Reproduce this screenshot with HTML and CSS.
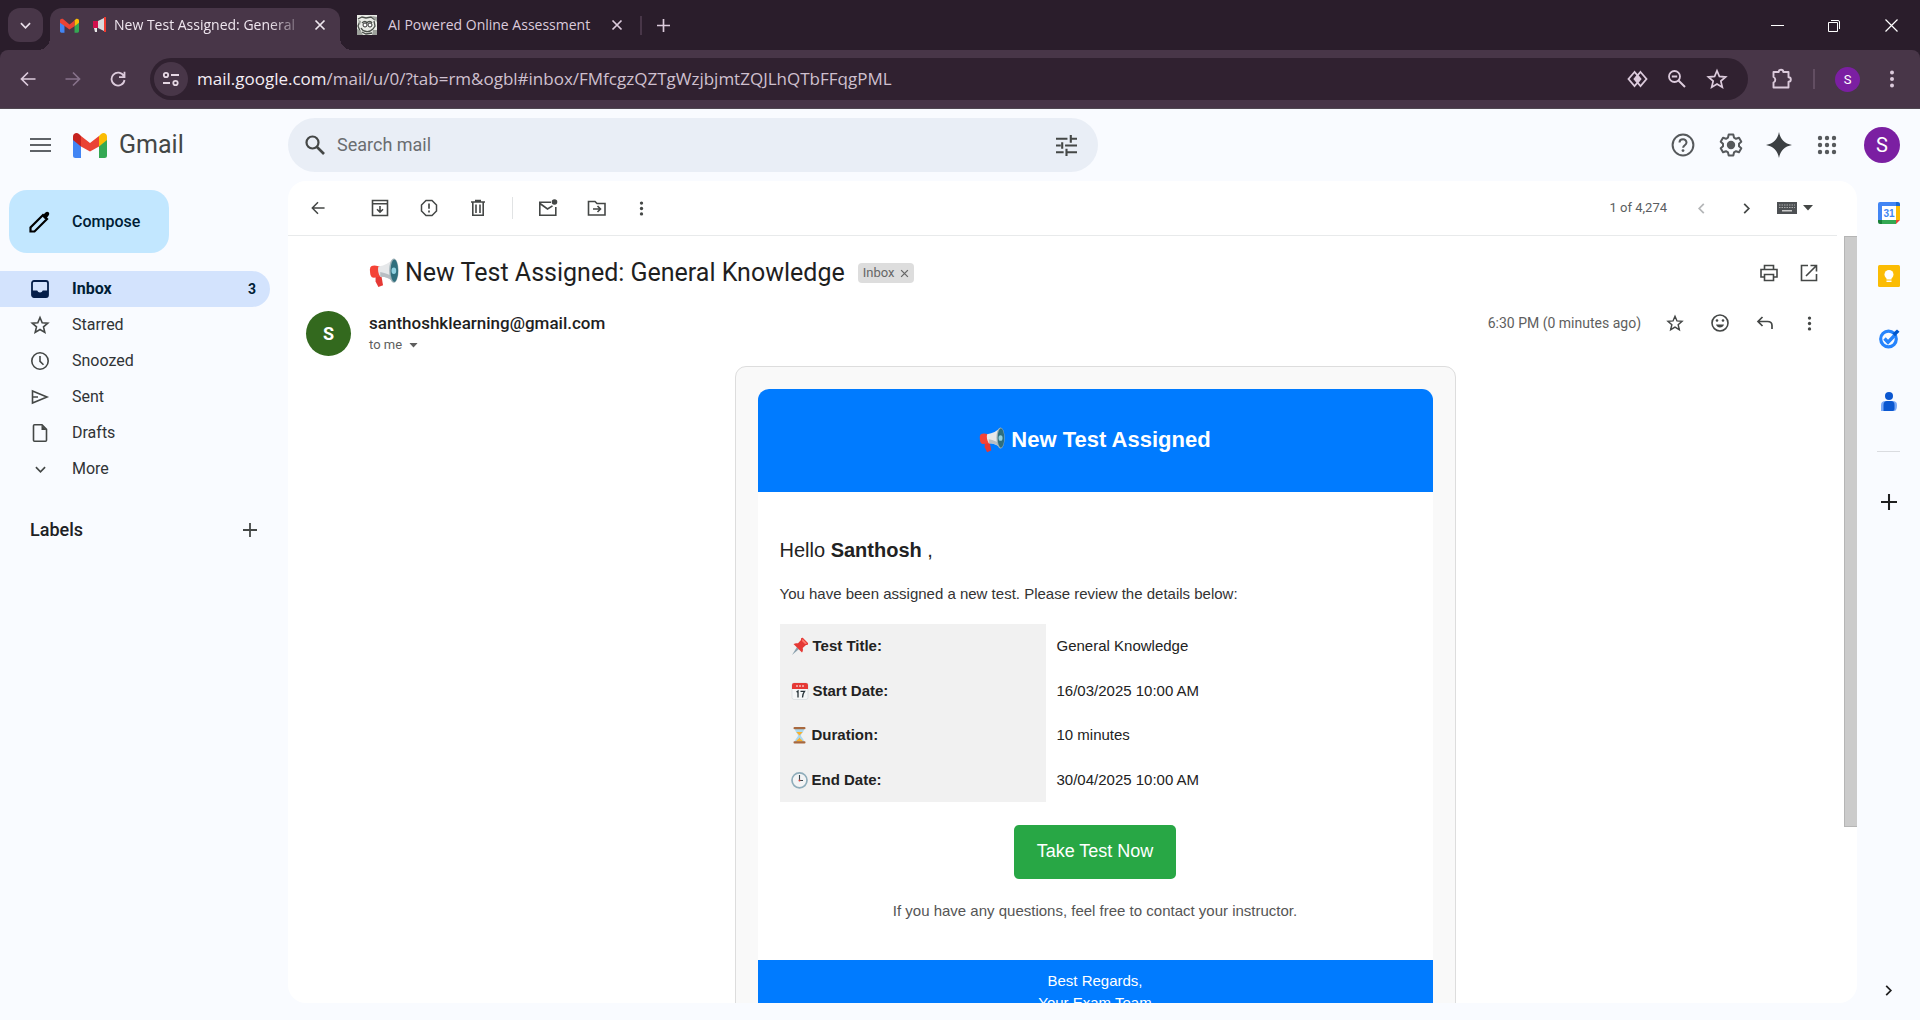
FILE: index.html
```html
<!DOCTYPE html>
<html lang="en">
<head>
<meta charset="utf-8">
<title>New Test Assigned: General Knowledge - Gmail</title>
<link rel="stylesheet" href="styles.css">
</head>
<body>
<svg class="sprite" aria-hidden="true">
  <symbol id="gmail" viewBox="0 0 34 26">
    <path fill="#4285f4" d="M0 7l8 6v13H2.500A2.500 2.500 0 0 1 0 23.500z"/>
    <path fill="#34a853" d="M34 7l-8 6v13h5.500a2.500 2.500 0 0 0 2.500-2.500z"/>
    <path fill="#fbbc04" d="M26 4l2-2c2.500-2 6-.500 6 2.500V8l-8 6.500z"/>
    <path fill="#ea4335" d="M8 14.500V4l9 7 9-7v10.500L17 19.500z"/>
    <path fill="#c5221f" d="M0 4.500V8l8 6.500V4L6 2C3.500 0 0 1.500 0 4.500z"/>
  </symbol>
  <symbol id="gmail-flat" viewBox="0 0 34 26">
    <path fill="#4285f4" d="M0 7l8 4v15H2.500A2.500 2.500 0 0 1 0 23.500z"/>
    <path fill="#34a853" d="M34 7l-8 4v15h5.500a2.500 2.500 0 0 0 2.500-2.500z"/>
    <path fill="#fbbc04" d="M26 4l2-2c2.500-2 6-.500 6 2.500V8l-8 6.500z"/>
    <path fill="#ea4335" d="M0 4.500C0 1.500 3.500 0 6 2l11 9 9-7v10.500L17 20 0 8z"/>
  </symbol>
  <symbol id="megaphone" viewBox="0 0 32 32">
    <path d="M7 17l6 1 2 11-5 2-3-6z" fill="#e53935"/>
    <path d="M1 12c0-3 2-4 5-4l6 1 1 11-8 1c-3 0-4-3-4-9z" fill="#f44336"/>
    <path d="M10 9c7-1 12-4 16-8l1 25c-4-4-9-6-15-6-2-3-3-8-2-11z" fill="#e6e8ea"/>
    <path d="M12 15c6 1 11 3 15 7v4c-4-4-9-6-15-6z" fill="#b8bec3"/>
    <ellipse cx="26.500" cy="13.500" rx="5" ry="13" fill="#9fb2b8"/>
    <ellipse cx="27" cy="13.500" rx="4" ry="12" fill="#2f6f7d"/>
    <ellipse cx="26.500" cy="13.500" rx="2.500" ry="3.500" fill="#8fd0e0"/>
  </symbol>
  <symbol id="close" viewBox="0 0 12 12"><path d="M1.500 1.500l9 9M10.500 1.500l-9 9" fill="none" stroke="currentColor" stroke-width="1.700"/></symbol>
  <symbol id="plus" viewBox="0 0 14 14"><path d="M7 0v14M0 7h14" fill="none" stroke="currentColor" stroke-width="1.800"/></symbol>
  <symbol id="chev-down" viewBox="0 0 12 12"><path d="M1 3.500l5 5 5-5" fill="none" stroke="currentColor" stroke-width="1.800"/></symbol>
  <symbol id="chev-right" viewBox="0 0 12 12"><path d="M3.500 1l5 5-5 5" fill="none" stroke="currentColor" stroke-width="1.900"/></symbol>
  <symbol id="chev-left" viewBox="0 0 12 12"><path d="M8.500 1l-5 5 5 5" fill="none" stroke="currentColor" stroke-width="1.900"/></symbol>
  <symbol id="caret" viewBox="0 0 10 6"><path d="M0 0h10L5 5.500z" fill="currentColor"/></symbol>
  <symbol id="arrow" viewBox="0 0 16 16"><path d="M15.500 8H1.500M8 1.500L1.500 8 8 14.500" fill="none" stroke="currentColor" stroke-width="1.700"/></symbol>
  <symbol id="reload" viewBox="0 0 16 16"><path d="M13.800 5A6.500 6.500 0 1 0 14.500 9M14.500 .8v5.400H9" fill="none" stroke="currentColor" stroke-width="1.800"/></symbol>
  <symbol id="dots" viewBox="0 0 6 18"><g fill="currentColor"><circle cx="3" cy="2.500" r="2"/><circle cx="3" cy="9" r="2"/><circle cx="3" cy="15.500" r="2"/></g></symbol>
  <symbol id="star" viewBox="0 0 20 20"><path d="M10 2.500l2.200 5.200 5.600.500-4.300 3.700 1.300 5.500L10 14.500l-4.800 2.900 1.300-5.500L2.200 8.200l5.600-.500z" fill="none" stroke="currentColor" stroke-width="1.600"/></symbol>
  <symbol id="tune" viewBox="0 0 22 22"><path d="M0 4h12M15.500 4H22M15.500 0v8M0 11h5M9.500 11H22M6.500 7.500v7M0 18h8M11 18h11M11 14.500v7.500" fill="none" stroke="currentColor" stroke-width="2.200"/></symbol>
</svg>

<header class="browser">
  <div class="tabstrip">
    <button class="tab-search" aria-label="Search tabs"><svg width="11" height="11"><use href="#chev-down"/></svg></button>
    <div class="tab tab-active">
      <svg width="19" height="15"><use href="#gmail-flat"/></svg>
      <svg class="tab-horn" width="14" height="16" viewBox="0 0 14 16"><path d="M0 4h6v7H0z" fill="#d0104c"/><path d="M1 11h3v4H2z" fill="#e8e8e8"/><path d="M5 4l6-3v13l-6-3z" fill="#d9dadb"/><path d="M11 0h2v15h-2z" fill="#f03a2e"/></svg>
      <span class="tab-title tab-fade">New Test Assigned: General</span>
      <button class="tab-close" aria-label="Close tab"><svg width="12" height="12"><use href="#close"/></svg></button>
    </div>
    <div class="tab tab-second">
      <svg width="20" height="20" viewBox="0 0 20 20"><path fill="#e9ebe6" d="M0 0h20v20H0z"/><path fill="none" stroke="#4a4f4a" stroke-width="1.300" d="M1 4l4-2 4 1 5-1 4 3M3 6l-2 5 2 5M5 8c2-2 4-2 5 0 1-2 4-2 5 0M4 13c2 4 8 5 12 1M5 17l4 2 6-1M17 6l1 5-2 3"/><path fill="#9da29c" d="M0 14l4 2 2 4H0zM15 1l5 1v5l-3-3zM16 15l4 0v5h-5zM1 5l3 1-1 4z"/><circle cx="8" cy="10" r="2" fill="#fff" stroke="#333"/><circle cx="13" cy="10" r="2" fill="#fff" stroke="#333"/></svg>
      <span class="tab-title">AI Powered Online Assessment</span>
      <button class="tab-close" aria-label="Close tab"><svg width="12" height="12"><use href="#close"/></svg></button>
    </div>
    <span class="tab-divider"></span>
    <button class="new-tab" aria-label="New tab"><svg width="13" height="13"><use href="#plus"/></svg></button>
    <div class="window-controls">
      <button aria-label="Minimize"><svg width="13" height="13" viewBox="0 0 13 13"><path d="M0 6.500h13" stroke="#fff"/></svg></button>
      <button aria-label="Restore"><svg width="13" height="13" viewBox="0 0 13 13"><path d="M.5 3.500h9v9h-9zM3 1.500h7a1.500 1.500 0 0 1 1.500 1.500v7" fill="none" stroke="#fff"/></svg></button>
      <button aria-label="Close"><svg width="13" height="13" viewBox="0 0 13 13"><path d="M.5 .5l12 12M12.500 .5l-12 12" stroke="#fff" stroke-width="1.200"/></svg></button>
    </div>
  </div>
  <div class="toolbar">
    <button class="tool" aria-label="Back"><svg width="16" height="16"><use href="#arrow"/></svg></button>
    <button class="tool tool-off" aria-label="Forward"><svg class="flip" width="16" height="16"><use href="#arrow"/></svg></button>
    <button class="tool" aria-label="Reload"><svg width="16" height="16"><use href="#reload"/></svg></button>
    <div class="omnibox">
      <button class="site-info" aria-label="Site information"><svg width="18" height="16" viewBox="0 0 18 16"><g fill="none" stroke="#e5d7e3" stroke-width="1.800"><circle cx="4" cy="4" r="2.200"/><path d="M9 4h8M1 12h7"/><circle cx="13.500" cy="12" r="2.200"/></g></svg></button>
      <div class="url"><span class="url-host">mail.google.com</span>/mail/u/0/?tab=rm&amp;ogbl#inbox/FMfcgzQZTgWzjbjmtZQJLhQTbFFqgPML</div>
      <button class="omni-btn" aria-label="Handler"><svg width="21" height="18" viewBox="0 0 21 18"><path d="M7.500 2L1.500 9l6 7 6-7zM13.500 2l6 7-6 7-6-7z" fill="none" stroke="currentColor" stroke-width="1.800"/><path d="M10.500 4.500L14 9l-3.500 4.500L7 9z" fill="currentColor"/></svg></button>
      <button class="omni-btn" aria-label="Zoom"><svg width="18" height="18" viewBox="0 0 18 18"><circle cx="6.500" cy="6.500" r="5.500" fill="none" stroke="currentColor" stroke-width="1.800"/><path d="M3.800 6.500h5.400M10.500 10.500l6.500 6.500" stroke="currentColor" stroke-width="2"/></svg></button>
      <button class="omni-btn" aria-label="Bookmark"><svg width="22" height="22"><use href="#star"/></svg></button>
    </div>
    <button class="ext" aria-label="Extensions"><svg width="22" height="22" viewBox="0 0 22 22"><path d="M2.500 4h5.200a2.300 2.300 0 0 1 4.600 0h5.200v5.200a2.300 2.300 0 0 1 0 4.600v5.700h-15v-5a3 3 0 0 0 0-5.500z" fill="none" stroke="currentColor" stroke-width="1.900" stroke-linejoin="round"/></svg></button>
    <span class="tool-divider"></span>
    <button class="profile-small" aria-label="Profile">S</button>
    <button class="chrome-menu" aria-label="Menu"><svg width="6" height="18"><use href="#dots"/></svg></button>
  </div>
</header>

<div class="gmail">
  <header class="topbar">
    <div class="brand">
      <button class="menu-btn" aria-label="Main menu"><svg width="21" height="14" viewBox="0 0 21 14"><path d="M0 1h21M0 7h21M0 13h21" stroke="#5f6368" stroke-width="2"/></svg></button>
      <a class="logo" href="#inbox"><svg width="34" height="26"><use href="#gmail"/></svg><span>Gmail</span></a>
    </div>
    <form class="search" role="search">
      <button type="button" aria-label="Search"><svg width="20" height="20" viewBox="0 0 20 20"><circle cx="7.500" cy="7.500" r="6" fill="none" stroke="currentColor" stroke-width="2.200"/><path d="M12 12l7 7" stroke="currentColor" stroke-width="2.600"/></svg></button>
      <input type="text" placeholder="Search mail" aria-label="Search mail">
      <button type="button" aria-label="Search options"><svg width="21" height="21"><use href="#tune"/></svg></button>
    </form>
    <div class="top-actions">
      <button aria-label="Support"><svg width="24" height="24" viewBox="0 0 24 24"><circle cx="12" cy="12" r="10.400" fill="none" stroke="currentColor" stroke-width="2"/><path d="M8.500 9.600c0-4.200 7-4.400 7-.1 0 2.800-3.300 2.700-3.400 5.300" fill="none" stroke="currentColor" stroke-width="2"/><circle cx="12" cy="17.600" r="1.400" fill="currentColor"/></svg></button>
      <button aria-label="Settings"><svg width="24" height="24" viewBox="0 0 24 24"><path d="M9.700 1.600h4.600l.7 3 2 1.200 3-1 2.300 4-2.300 2v2.400l2.300 2-2.300 4-3-1-2 1.200-.7 3H9.700l-.7-3-2-1.200-3 1-2.300-4 2.300-2v-2.400l-2.300-2 2.300-4 3 1 2-1.200z" fill="none" stroke="currentColor" stroke-width="2" stroke-linejoin="round"/><circle cx="12" cy="12" r="4.200" fill="currentColor"/></svg></button>
      <button aria-label="Gemini"><svg width="26" height="26" viewBox="0 0 26 26"><path d="M13 0c1.500 7.500 5.500 11.500 13 13-7.500 1.500-11.500 5.500-13 13C11.500 18.500 7.500 14.500 0 13 7.500 11.500 11.500 7.500 13 0z" fill="#3c4043"/></svg></button>
      <button aria-label="Google apps"><svg width="20" height="20" viewBox="0 0 20 20"><g fill="currentColor"><circle cx="3" cy="3" r="2.200"/><circle cx="10" cy="3" r="2.200"/><circle cx="17" cy="3" r="2.200"/><circle cx="3" cy="10" r="2.200"/><circle cx="10" cy="10" r="2.200"/><circle cx="17" cy="10" r="2.200"/><circle cx="3" cy="17" r="2.200"/><circle cx="10" cy="17" r="2.200"/><circle cx="17" cy="17" r="2.200"/></g></svg></button>
      <button class="account" aria-label="Account">S</button>
    </div>
  </header>

  <div class="workspace">
    <nav class="sidebar">
      <button class="compose"><svg width="22" height="22" viewBox="0 0 22 22"><path d="M1.500 20.500v-4L14 4l4 4L5.500 20.500z" fill="none" stroke="#000" stroke-width="2.200"/><path d="M13 5l3.500-3.600c1-.9 2.300-.9 3.100-.1s.9 2.100 0 3.100L16.500 8.500z" fill="#000"/></svg><span>Compose</span></button>
      <ul class="folders">
        <li><a class="folder folder-current" href="#inbox"><svg width="18" height="18" viewBox="0 0 18 18"><path d="M3 1h12a2 2 0 0 1 2 2v12a2 2 0 0 1-2 2H3a2 2 0 0 1-2-2V3a2 2 0 0 1 2-2z" fill="none" stroke="#041e49" stroke-width="1.800"/><path d="M1 10.500h5.200a3 3 0 0 0 5.600 0H17V15l-2 2H3l-2-2z" fill="#041e49"/></svg><span>Inbox</span><span class="count">3</span></a></li>
        <li><a class="folder" href="#starred"><svg width="20" height="20"><use href="#star"/></svg><span>Starred</span></a></li>
        <li><a class="folder" href="#snoozed"><svg width="20" height="20" viewBox="0 0 20 20"><circle cx="10" cy="10" r="8.200" fill="none" stroke="currentColor" stroke-width="1.600"/><path d="M10 5v5.300l3.500 3.500" fill="none" stroke="currentColor" stroke-width="1.600"/></svg><span>Snoozed</span></a></li>
        <li><a class="folder" href="#sent"><svg width="20" height="20" viewBox="0 0 20 20"><path d="M2.500 4L17 10 2.500 16zM2.500 10h5.500" fill="none" stroke="currentColor" stroke-width="1.600"/></svg><span>Sent</span></a></li>
        <li><a class="folder" href="#drafts"><svg width="20" height="20" viewBox="0 0 20 20"><path d="M4.500 1.800h7.500l4.500 4.500v10.900a1 1 0 0 1-1 1h-11a1 1 0 0 1-1-1V2.800a1 1 0 0 1 1-1z" fill="none" stroke="currentColor" stroke-width="1.600"/><path d="M11.500 2v5h5z" fill="currentColor"/></svg><span>Drafts</span></a></li>
        <li><a class="folder" href="#more"><svg width="11" height="11"><use href="#chev-down"/></svg><span>More</span></a></li>
      </ul>
      <div class="labels"><h2>Labels</h2><button aria-label="Create new label"><svg width="14" height="14"><use href="#plus"/></svg></button></div>
    </nav>

    <main class="mail">
      <div class="mail-tools">
        <button class="mt mt-back" aria-label="Back to Inbox"><svg width="14" height="14"><use href="#arrow"/></svg></button>
        <button class="mt" aria-label="Archive"><svg width="18" height="18" viewBox="0 0 18 18"><path d="M1.500 1.500h15v15h-15zM1.500 4.800h15M9 7v6M6 10.200l3 3 3-3" fill="none" stroke="currentColor" stroke-width="1.600"/></svg></button>
        <button class="mt" aria-label="Report spam"><svg width="18" height="18" viewBox="0 0 18 18"><path d="M6 1.500h6L16.500 6v6L12 16.500H6L1.500 12V6z" fill="none" stroke="currentColor" stroke-width="1.500"/><path d="M9 4.500v5.300M9 11.500v2" stroke="currentColor" stroke-width="1.700"/></svg></button>
        <button class="mt" aria-label="Delete"><svg width="16" height="18" viewBox="0 0 16 18"><path d="M2.800 3v13.200h10.400V3M1 3h14M5 1.500h6M6 5.500v8.500M10 5.500v8.500" fill="none" stroke="currentColor" stroke-width="1.600"/></svg></button>
        <span class="mt-divider"></span>
        <button class="mt" aria-label="Mark as unread"><svg width="20" height="18" viewBox="0 0 20 18"><path d="M13 3.300H1.800v13h16V8M2 4.500l7.500 5.500 5-3.200" fill="none" stroke="currentColor" stroke-width="1.600"/><circle cx="16.500" cy="3" r="2.800" fill="currentColor"/></svg></button>
        <button class="mt" aria-label="Move to"><svg width="20" height="18" viewBox="0 0 20 18"><path d="M1.500 2.500H8l2 2h8v11.500H1.500zM6 10h7M10.500 7l3 3-3 3" fill="none" stroke="currentColor" stroke-width="1.600"/></svg></button>
        <button class="mt mt-more" aria-label="More"><svg width="5" height="15"><use href="#dots"/></svg></button>
        <span class="pager">1 of 4,274</span>
        <button class="mt-page mt-dim" aria-label="Newer"><svg width="11" height="11"><use href="#chev-left"/></svg></button>
        <button class="mt-page" aria-label="Older"><svg width="11" height="11"><use href="#chev-right"/></svg></button>
        <button class="mt-input" aria-label="Input tools"><svg width="20" height="12" viewBox="0 0 20 12"><path d="M0 0h20v12H0z" fill="#4d5053"/><path d="M2 3h16M2 5.500h16" stroke="#aaa" stroke-dasharray="1.500 1"/><path d="M5 8.800h10" stroke="#ccc" stroke-width="1.500"/></svg><svg width="10" height="6"><use href="#caret"/></svg></button>
      </div>

      <div class="thread-wrap">
        <article class="thread">
          <div class="subject-row">
            <svg width="30" height="30"><use href="#megaphone"/></svg>
            <h1>New Test Assigned: General Knowledge</h1>
            <span class="chip">Inbox <svg width="9" height="9"><use href="#close"/></svg></span>
            <div class="subject-actions">
              <button aria-label="Print all"><svg width="18" height="18" viewBox="0 0 18 18"><path d="M4.500 5V1.500h9V5M4.500 13H1V5.500h16V13h-3.500M4.500 10.500h9v6h-9z" fill="none" stroke="currentColor" stroke-width="1.600"/></svg></button>
              <button aria-label="In new window"><svg width="18" height="18" viewBox="0 0 18 18"><path d="M8 1.500H1.500v15h15V10M10.500 1.500h6v6M16 2L6 12" fill="none" stroke="currentColor" stroke-width="1.600"/></svg></button>
            </div>
          </div>
          <div class="sender-row">
            <span class="sender-avatar">S</span>
            <div class="sender">
              <strong>santhoshklearning@gmail.com</strong>
              <span class="to-me">to me <svg width="9" height="5" viewBox="0 0 10 6"><use href="#caret"/></svg></span>
            </div>
            <time>6:30 PM (0 minutes ago)</time>
            <div class="msg-actions">
              <button aria-label="Star"><svg width="18" height="18"><use href="#star"/></svg></button>
              <button aria-label="Add reaction"><svg width="18" height="18" viewBox="0 0 18 18"><circle cx="9" cy="9" r="8" fill="none" stroke="currentColor" stroke-width="1.600"/><circle cx="6" cy="6.500" r="1.300" fill="currentColor"/><circle cx="12" cy="6.500" r="1.300" fill="currentColor"/><path d="M5 10.500h8c-1 4-7 4-8 0z" fill="currentColor"/></svg></button>
              <button aria-label="Reply"><svg width="18" height="18" viewBox="0 0 18 18"><path d="M6.500 3L2 7.500 6.500 12M2 7.500h9.500c3 0 4.500 1.500 4.500 4v3.500" fill="none" stroke="currentColor" stroke-width="1.700"/></svg></button>
              <button aria-label="More"><svg width="5" height="15"><use href="#dots"/></svg></button>
            </div>
          </div>

          <div class="message">
            <section class="card">
              <div class="card-head"><svg width="26" height="28"><use href="#megaphone"/></svg><h2>New Test Assigned</h2></div>
              <div class="card-body">
                <p class="hello">Hello <b>Santhosh</b> ,</p>
                <p class="intro">You have been assigned a new test. Please review the details below:</p>
                <table class="details">
                  <tr><th scope="row"><svg width="18" height="18" viewBox="0 0 18 18"><path d="M6 10l2 2-7 6z" fill="#8aa0ad"/><path d="M2.500 7c2-1 3-1 4.500-.7l3-3.300C9.700 1.500 10.500 .5 12 1l5 5c.4 1.500-.5 2.300-2 2l-3.300 3c.5 1.700.3 3-.7 4.500z" fill="#e53935"/><path d="M11.500 2l4.500 4.500-2 .5-3-3z" fill="#ff7a6e"/></svg>Test Title:</th><td>General Knowledge</td></tr>
                  <tr><th scope="row"><svg width="18" height="18" viewBox="0 0 18 18"><rect x="1" y="1" width="16" height="16.500" rx="2" fill="#f4f6f7" stroke="#cfd5d8" stroke-width=".6"/><path d="M3 1h12a2 2 0 0 1 2 2v4H1V3a2 2 0 0 1 2-2z" fill="#e53935"/><path d="M5 4h2M8 4h2M11 4h2" stroke="#fff"/><path d="M5.500 10l1.500-1v6.500M9.500 9.300h4c-1.500 2-2 4-2 6.200" fill="none" stroke="#263238" stroke-width="1.300"/></svg>Start Date:</th><td>16/03/2025 10:00 AM</td></tr>
                  <tr><th scope="row"><svg width="17" height="18" viewBox="0 0 17 18"><path d="M4 3c0 3 3 4.500 3 6.500S4 12.500 4 16h9c0-3.500-3-4.500-3-6.500S13 6 13 3z" fill="#a9d8ee"/><path d="M5.300 6h6.400L8.500 9.500zM5 15.500c1-2 2.500-2 3.500-4 1 2 2.500 2 3.500 4z" fill="#fbb02c"/><rect x="2.500" y="1" width="12" height="2.300" rx="1" fill="#a8683e"/><rect x="2.500" y="15.200" width="12" height="2.300" rx="1" fill="#a8683e"/></svg>Duration:</th><td>10 minutes</td></tr>
                  <tr><th scope="row"><svg width="17" height="18" viewBox="0 0 17 18"><circle cx="8.500" cy="9.300" r="7.500" fill="#f3f4f5" stroke="#8fadbb" stroke-width="1.700"/><path d="M8.500 4v5.500h3.500" fill="none" stroke="#37474f" stroke-width="1.100"/><circle cx="8.500" cy="9.500" r="1" fill="#d8433c"/></svg>End Date:</th><td>30/04/2025 10:00 AM</td></tr>
                </table>
                <a class="cta" href="#test">Take Test Now</a>
                <p class="note">If you have any questions, feel free to contact your instructor.</p>
              </div>
              <div class="card-foot">Best Regards,<br>Your Exam Team</div>
            </section>
          </div>
        </article>
        <div class="scroll-track"><div class="scroll-thumb"></div></div>
      </div>
    </main>

    <aside class="rail">
      <button aria-label="Calendar"><svg width="22" height="22" viewBox="0 0 22 22"><path d="M2 0h16v4H4v14H0V2a2 2 0 0 1 2-2z" fill="#4285f4"/><path d="M18 0h2a2 2 0 0 1 2 2v2h-4z" fill="#1967d2"/><path d="M18 4h4v14h-4z" fill="#fbbc04"/><path d="M4 18h14v4H4z" fill="#34a853"/><path d="M0 18h4v4H2a2 2 0 0 1-2-2z" fill="#188038"/><path d="M18 18h4l-4 4z" fill="#ea4335"/><path d="M4 4h14v14H4z" fill="#fff"/><text x="11" y="15" text-anchor="middle" class="cal-day">31</text></svg></button>
      <button aria-label="Keep"><svg width="22" height="22" viewBox="0 0 22 22"><rect width="22" height="22" rx="1.500" fill="#fbbc04"/><circle cx="11" cy="9.500" r="4.500" fill="#fff"/><path d="M8.500 12h5v2.500h-5zM8.500 15.500h5V17h-5z" fill="#fff"/></svg></button>
      <button aria-label="Tasks"><svg width="22" height="22" viewBox="0 0 22 22"><circle cx="10.500" cy="11" r="7.800" fill="none" stroke="#2684fc" stroke-width="3.200"/><path d="M6.500 10.500l3.500 3.700 6.500-6.700" fill="none" stroke="#2684fc" stroke-width="3.400"/><path d="M14.500 5.500l4.500-4 2.500 2.200-4.500 4.500z" fill="#0057cc"/></svg></button>
      <button aria-label="Contacts"><svg width="20" height="22" viewBox="0 0 20 22"><circle cx="10" cy="5" r="4" fill="#0b57d0"/><path d="M2 14c0-3 2-4 4-4h8c2 0 4 1 4 4 0 4-1 6-3 6H2z" fill="#7baaf7"/><path d="M4.500 14c0-3 1.500-4 3.500-4h4c2 0 3.500 1 3.500 4v4c0 1-1 2-2 2h-9z" fill="#0b57d0"/></svg></button>
      <hr>
      <button class="rail-add" aria-label="Get Add-ons"><svg width="16" height="16"><use href="#plus"/></svg></button>
      <button class="rail-hide" aria-label="Hide side panel"><svg width="11" height="11"><use href="#chev-right"/></svg></button>
    </aside>
  </div>
</div>
</body>
</html>
```
FILE: styles.css
```css
* { box-sizing: border-box; }

body {
  margin: 0;
  height: 100vh;
  display: flex;
  flex-direction: column;
  overflow: hidden;
  background: #f9fbff;
  color: #202124;
  font: 16px/22px Roboto, "Liberation Sans", sans-serif;
}

button {
  display: flex;
  align-items: center;
  justify-content: center;
  flex-shrink: 0;
  padding: 0;
  border: 0;
  background: none;
  color: inherit;
  font: inherit;
}

svg { display: block; flex-shrink: 0; }
a { color: inherit; text-decoration: none; }
h1, h2, p, ul { margin: 0; padding: 0; font-weight: 400; }
li { list-style: none; }
.sprite { position: absolute; width: 0; height: 0; }

/* Browser frame */
.browser {
  flex-shrink: 0;
  background: #2a1d2b;
  color: #dccbdc;
  font-family: "Open Sans", "Noto Sans", sans-serif;
}

.tabstrip {
  display: flex;
  align-items: center;
  height: 50px;
  padding-left: 8px;
}

.tab-search {
  width: 35px;
  height: 34px;
  margin-right: 7px;
  border-radius: 12px;
  background: #483648;
  color: #eadfea;
}

.tab { display: flex; align-items: center; font-size: 14px; }

.tab-active {
  position: relative;
  align-self: flex-end;
  width: 290px;
  height: 42px;
  padding: 0 12px 8px 10px;
  border-radius: 12px 12px 0 0;
  background: #483648;
  color: #efe6ef;
}

.tab-active::before,
.tab-active::after {
  content: "";
  position: absolute;
  bottom: 0;
  width: 12px;
  height: 12px;
}
.tab-active::before { right: 100%; background: radial-gradient(circle at 0 0, transparent 12px, #483648 12px); }
.tab-active::after { left: 100%; background: radial-gradient(circle at 100% 0, transparent 12px, #483648 12px); }

.tab-horn { margin: 0 7px 0 14px; }
.tab-title { flex: 1; white-space: nowrap; }
.tab-fade {
  -webkit-mask-image: linear-gradient(to right, #000 85%, rgba(0, 0, 0, .3));
  mask-image: linear-gradient(to right, #000 85%, rgba(0, 0, 0, .3));
}

.tab-close { width: 16px; height: 16px; margin-left: 16px; }
.tab-second { width: 285px; gap: 11px; padding-left: 17px; }
.tab-second .tab-close { margin-left: 0; }
.tab-divider { width: 2px; height: 19px; margin-left: 15px; background: #483648; }
.new-tab { width: 34px; height: 34px; margin-left: 4px; }
.window-controls { display: flex; margin-left: auto; }
.window-controls button { width: 57px; height: 48px; }

.toolbar {
  display: flex;
  align-items: center;
  height: 59px;
  padding: 0 17px 0 5px;
  border-radius: 8px 8px 0 0;
  border-bottom: 1px solid #504851;
  background: #483648;
}

.tool { width: 45px; height: 40px; }
.tool-off { color: #86728a; }
.flip { transform: scaleX(-1); }

.omnibox {
  display: flex;
  align-items: center;
  flex: 1;
  min-width: 0;
  height: 42px;
  margin-left: 10px;
  padding: 0 11px 0 4px;
  border-radius: 21px;
  background: #302130;
}

.site-info { width: 34px; height: 34px; margin-right: 9px; border-radius: 50%; background: #483648; }
.url { flex: 1; min-width: 0; overflow: hidden; white-space: nowrap; font-size: 17px; color: #cfc0cf; }
.url-host { color: #f4edf4; }
.omni-btn { width: 40px; height: 34px; }
.ext { width: 44px; margin-left: 12px; }
.tool-divider { width: 2px; height: 20px; margin: 0 20px 0 9px; background: #624e62; }
.profile-small {
  width: 25px;
  height: 25px;
  border-radius: 50%;
  background: #7b1fa2;
  color: #fff;
  font: 13px/25px Roboto, sans-serif;
}
.chrome-menu { width: 22px; margin-left: 21px; }

/* Gmail header */
.gmail { flex: 1; min-height: 0; display: flex; flex-direction: column; color: #444746; }
.topbar { display: flex; align-items: center; flex-shrink: 0; height: 72px; padding-right: 20px; }
.brand { display: flex; align-items: center; width: 288px; flex-shrink: 0; }
.menu-btn { width: 40px; height: 40px; margin: 0 13px 0 20px; }
.logo { display: flex; align-items: center; gap: 12px; font-size: 25px; }

.search {
  display: flex;
  align-items: center;
  flex: 0 1 810px;
  height: 54px;
  padding: 0 12px 0 7px;
  border-radius: 27px;
  background: #e9eef6;
}
.search button { width: 40px; height: 40px; }
.search input {
  flex: 1;
  min-width: 0;
  padding: 0 2px;
  border: 0;
  outline: 0;
  background: none;
  font: 18px/24px Roboto, sans-serif;
}
.search input::placeholder { color: #6a6d70; }

.top-actions { display: flex; align-items: center; margin-left: auto; color: #56595c; }
.top-actions button { width: 48px; height: 48px; }
.top-actions .account {
  width: 36px;
  height: 36px;
  margin-left: 13px;
  border-radius: 50%;
  background: #7b1fa2;
  color: #fff;
  font-size: 20px;
}

.workspace { flex: 1; min-height: 0; display: flex; }

/* Sidebar */
.sidebar { width: 288px; flex-shrink: 0; padding-top: 9px; }
.compose {
  justify-content: flex-start;
  gap: 21px;
  width: 160px;
  height: 63px;
  margin: 0 0 18px 9px;
  padding-left: 20px;
  border-radius: 18px;
  background: #c2e7ff;
  color: #001d35;
  font-weight: 500;
}
.folder {
  display: grid;
  grid-template-columns: 64px 1fr auto;
  align-items: center;
  height: 36px;
  margin-right: 18px;
  padding: 0 14px 0 8px;
  border-radius: 0 18px 18px 0;
  color: #303336;
}
.folder svg { justify-self: center; color: #444746; }
.folder-current { background: #d3e3fd; color: #001d35; font-weight: 700; }
.count { font-size: 14px; }
.labels { display: flex; align-items: center; justify-content: space-between; margin-top: 23px; padding: 0 28px 0 30px; }
.labels h2 { font-size: 18px; line-height: 40px; font-weight: 500; color: #202124; }
.labels button { width: 20px; height: 40px; }

/* Mail pane */
.mail {
  flex: 1;
  min-width: 0;
  display: flex;
  flex-direction: column;
  margin-bottom: 17px;
  border-radius: 18px;
  background: #fff;
  overflow: hidden;
}
.mail-tools {
  display: flex;
  align-items: center;
  flex-shrink: 0;
  height: 55px;
  margin-right: 20px;
  padding: 0 16px 0 5px;
  border-bottom: 1px solid #e8eaeb;
}
.mt { width: 49px; height: 40px; }
.mt-back { margin-right: 13px; }
.mt-divider { width: 1px; height: 22px; margin: 0 10px; background: #e1e3e4; }
.mt-more { width: 40px; }
.pager { margin-left: auto; margin-right: 12px; font-size: 13px; color: #5a5d60; }
.mt-page { width: 45px; height: 40px; }
.mt-dim { color: #b4b6b8; }
.mt-input { gap: 6px; padding: 0 8px; height: 40px; }

.thread-wrap { flex: 1; min-height: 0; display: flex; }
.thread { flex: 1; min-width: 0; overflow: hidden; }
.scroll-track { width: 13px; flex-shrink: 0; }
.scroll-thumb { height: 77%; border: 1px solid #b5b5b5; border-right: 0; background: #cbcbcb; }

.subject-row { display: flex; align-items: center; height: 74px; padding: 0 15px 0 81px; }
.subject-row h1 { margin: 0 13px 0 6px; font-size: 25px; line-height: 32px; color: #1f1f1f; }
.chip {
  display: flex;
  align-items: center;
  gap: 6px;
  padding: 0 5px;
  border-radius: 4px;
  background: #ddd;
  color: #666;
  font-size: 13px;
  line-height: 20px;
}
.subject-actions { display: flex; margin-left: auto; }
.subject-actions button { width: 40px; height: 40px; }

.sender-row { display: flex; align-items: flex-start; height: 56px; padding: 1px 12px 0 18px; }
.sender-avatar {
  width: 45px;
  height: 45px;
  margin-right: 18px;
  border-radius: 50%;
  background: #33691e;
  color: #fff;
  font-size: 18px;
  font-weight: 700;
  line-height: 45px;
  text-align: center;
}
.sender { display: flex; flex-direction: column; }
.sender strong { color: #1f1f1f; font-size: 17px; line-height: 24px; font-weight: 500; }
.to-me { display: flex; align-items: center; gap: 7px; color: #5e5e5e; font-size: 13px; line-height: 20px; }
.sender-row time { margin-left: auto; margin-right: 11px; font-size: 14px; line-height: 24px; color: #5e5e5e; }
.msg-actions { display: flex; }
.msg-actions button { width: 45px; height: 24px; }

/* Message body */
.message { padding: 0 23px 0 81px; }
.card {
  max-width: 721px;
  margin: 0 auto;
  padding: 22px;
  border: 1px solid #ddd;
  border-radius: 11px;
  background: #f9f9f9;
  color: #222;
  font: 15px/22px "Liberation Sans", Arial, sans-serif;
}
.card-head {
  display: flex;
  align-items: center;
  justify-content: center;
  gap: 6px;
  height: 103px;
  padding-bottom: 2px;
  border-radius: 11px 11px 0 0;
  background: #007bff;
  color: #fff;
}
.card-head h2 { font-size: 22px; line-height: 30px; font-weight: 700; }
.card-body { padding: 42px 22px 38px; background: #fff; }
.hello { font-size: 20px; line-height: 32px; }
.intro { margin: 17px 0 19px; color: #333; }
.details { width: 100%; height: 178px; border-spacing: 0; }
.details th, .details td { padding: 0 11px; text-align: left; }
.details th { width: 266px; background: #f1f1f1; font-weight: 700; }
.details th svg { display: inline-block; margin-right: 4px; vertical-align: -4px; }
.cta {
  display: block;
  width: fit-content;
  margin: 23px auto 21px;
  padding: 15px 23px 17px;
  border-radius: 5px;
  background: #28a745;
  color: #fff;
  font-size: 18px;
}
.note { color: #555; text-align: center; }
.card-foot { padding: 10px; background: #007bff; color: #fff; text-align: center; }

/* Side panel */
.rail { display: flex; flex-direction: column; width: 63px; flex-shrink: 0; color: #1f1f1f; }
.rail button { width: 63px; height: 63px; }
.rail hr { width: 23px; height: 1px; margin: 18px auto; border: 0; background: #dadce0; }
.rail .rail-hide { height: 60px; margin-top: auto; }
.cal-day { font: 700 10px "Liberation Sans", sans-serif; fill: #4285f4; }
```
